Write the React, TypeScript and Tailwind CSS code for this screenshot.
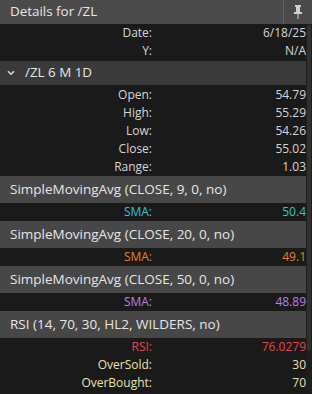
import React from 'react';

type Row = { label: string; value: string; color?: string };

function DataRow({ label, value, color = 'text-[#d6d6d6]' }: Row) {
  return (
    <div className="flex h-[18px] items-center bg-[#1a1a1a]">
      <div className={`w-[152px] text-right ${color}`}>{label}</div>
      <div className={`flex-1 text-right ${color}`}>{value}</div>
    </div>
  );
}

function StudyHeader({ title }: { title: string }) {
  return (
    <div className="flex h-[27px] items-center bg-[#474747] pl-[10px] text-[#e6e6e6] text-[13.5px]">
      {title}
    </div>
  );
}

export default function App() {
  return (
    <div
      className="w-[312px] h-[394px] overflow-hidden bg-[#1a1a1a] text-[12px] leading-none"
      style={{ fontFamily: '"Open Sans", "Noto Sans", sans-serif' }}
    >
      {/* Title bar */}
      <div className="flex h-[24px] items-stretch bg-[#4a4a4a]">
        <div className="flex flex-1 items-center pl-[10px] text-[13.4px] text-[#e8e8e8]">Details for /ZL</div>
        <div className="w-px bg-[#5e5e5e]" />
        <div className="flex w-[28px] items-center justify-center">
          <svg width="10" height="14" viewBox="0 0 10 14" fill="#d0d0d0">
            <rect x="2" y="0" width="6" height="2" />
            <rect x="3" y="2" width="4" height="5" />
            <rect x="1" y="7" width="8" height="2" />
            <rect x="4.5" y="9" width="1" height="5" />
          </svg>
        </div>
      </div>

      <div className="flex">
        <div className="w-[306px]">
          <DataRow label="Date:" value="6/18/25" />
          <DataRow label="Y:" value="N/A" />

          {/* Group */}
          <div className="mt-px flex h-[24px] items-center bg-[#3a3a3a] text-[13.4px] text-[#e6e6e6]">
            <svg className="ml-[7px] mr-[10px]" width="8" height="6" viewBox="0 0 8 6" fill="none" stroke="#d8d8d8" strokeWidth="1.6">
              <path d="M1 1.2 L4 4.2 L7 1.2" />
            </svg>
            /ZL 6 M 1D
          </div>
          <div className="h-px bg-[#1a1a1a]" />

          <DataRow label="Open:" value="54.79" />
          <DataRow label="High:" value="55.29" />
          <DataRow label="Low:" value="54.26" />
          <DataRow label="Close:" value="55.02" />
          <DataRow label="Range:" value="1.03" />

          <StudyHeader title="SimpleMovingAvg (CLOSE, 9, 0, no)" />
          <DataRow label="SMA:" value="50.4" color="text-[#2ec5cf]" />
          <StudyHeader title="SimpleMovingAvg (CLOSE, 20, 0, no)" />
          <DataRow label="SMA:" value="49.1" color="text-[#e3832a]" />
          <StudyHeader title="SimpleMovingAvg (CLOSE, 50, 0, no)" />
          <DataRow label="SMA:" value="48.89" color="text-[#b77ff0]" />
          <StudyHeader title="RSI (14, 70, 30, HL2, WILDERS, no)" />
          <DataRow label="RSI:" value="76.0279" color="text-[#e2474f]" />
          <DataRow label="OverSold:" value="30" color="text-[#ebe1ad]" />
          <DataRow label="OverBought:" value="70" color="text-[#ebe1ad]" />
        </div>

        {/* Scrollbar */}
        <div className="w-[6px] bg-[#1e1e1e] pt-px">
          <div className="mx-px h-[326px] rounded-sm bg-[#303030]" />
        </div>
      </div>
    </div>
  );
}
